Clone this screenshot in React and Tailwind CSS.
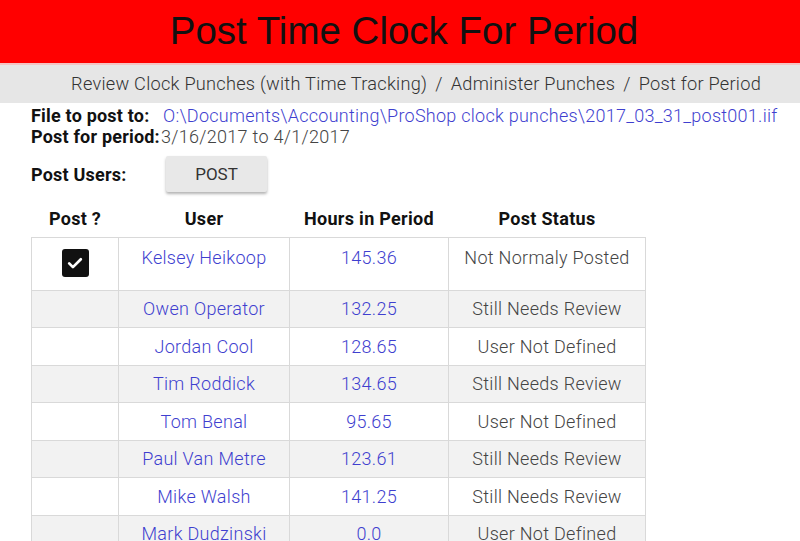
import React from "react";

const rows = [
  { name: "Kelsey Heikoop", hours: "145.36", status: "Not Normaly Posted", checked: true },
  { name: "Owen Operator", hours: "132.25", status: "Still Needs Review" },
  { name: "Jordan Cool", hours: "128.65", status: "User Not Defined" },
  { name: "Tim Roddick", hours: "134.65", status: "Still Needs Review" },
  { name: "Tom Benal", hours: "95.65", status: "User Not Defined" },
  { name: "Paul Van Metre", hours: "123.61", status: "Still Needs Review" },
  { name: "Mike Walsh", hours: "141.25", status: "Still Needs Review" },
  { name: "Mark Dudzinski", hours: "0.0", status: "User Not Defined" },
];

export default function App() {
  return (
    <div className="w-[800px] h-[541px] overflow-hidden bg-white font-['Roboto',sans-serif]">
      <div className="h-[63px] bg-[#ff0000] flex items-center justify-center">
        <h1 className="font-['Liberation_Sans',Arial,sans-serif] text-[38.5px] text-[#111] pl-[8px] leading-none">
          Post Time Clock For Period
        </h1>
      </div>
      <div className="h-[2px] bg-[#f4c4c4]" />
      <div className="h-[38px] bg-[#e6e6e6] flex items-center justify-end pr-[39px] text-[18.2px] font-light tracking-[0.25px] text-[#333]">
        <span>Review Clock Punches (with Time Tracking)</span>
        <span className="mx-[8px]">/</span>
        <span>Administer Punches</span>
        <span className="mx-[8px]">/</span>
        <span>Post for Period</span>
      </div>
      <div className="pl-[31px] pt-[2px] text-[18px] leading-[21px]">
        <div className="flex">
          <span className="font-bold text-[#111] w-[132px] tracking-[0.2px]">File to post to:</span>
          <span className="text-[#3f3fcf] font-light tracking-[0.26px]">O:\Documents\Accounting\ProShop clock punches\2017_03_31_post001.iif</span>
        </div>
        <div className="flex">
          <span className="font-bold text-[#111] tracking-[0.2px]">Post for period:</span>
          <span className="text-[#444] font-light tracking-[0.3px] ml-[1px]">3/16/2017 to 4/1/2017</span>
        </div>
        <div className="flex items-center mt-[9px]">
          <span className="font-bold text-[#111] w-[135px] tracking-[0.2px]">Post Users:</span>
          <button className="w-[101px] h-[36px] bg-[#e8e8e8] rounded-[2px] text-[17px] text-[#333] shadow-[0_2px_3px_rgba(0,0,0,0.3)]">
            POST
          </button>
        </div>
        <table className="mt-[9px] border-collapse text-[18px]">
          <thead>
            <tr className="h-[36px]">
              <th className="w-[87px] font-bold text-[#111] tracking-[0.3px] align-middle">Post ?</th>
              <th className="w-[171px] font-bold text-[#111] tracking-[0.3px]">User</th>
              <th className="w-[159px] font-bold text-[#111] tracking-[0.3px]">Hours in Period</th>
              <th className="w-[197px] font-bold text-[#111] tracking-[0.3px]">Post Status</th>
            </tr>
          </thead>
          <tbody>
            {rows.map((r, i) => (
              <tr key={i} className={i % 2 === 1 ? "bg-[#f2f2f2]" : "bg-white"}>
                <td className={"border border-[#d9d9d9] text-center " + (r.checked ? "h-[53px] align-top pt-[11px]" : "h-[37.5px]")}>
                  {r.checked && (
                    <span className="inline-flex w-[27px] h-[28px] bg-[#111] rounded-[3px] items-center justify-center">
                      <svg width="20" height="20" viewBox="0 0 24 24" fill="none" stroke="white" strokeWidth="3.2" strokeLinecap="round" strokeLinejoin="round">
                        <path d="M5 12.5l4.5 4.5L19 7.5" />
                      </svg>
                    </span>
                  )}
                </td>
                <td className={"border border-[#d9d9d9] text-center text-[#3f3fcf] font-light tracking-[0.3px] " + (r.checked ? "align-top pt-[9px]" : "")}>{r.name}</td>
                <td className={"border border-[#d9d9d9] text-center text-[#3f3fcf] font-light tracking-[0.3px] " + (r.checked ? "align-top pt-[9px]" : "")}>{r.hours}</td>
                <td className={"border border-[#d9d9d9] text-center text-[#444] font-light tracking-[0.3px] " + (r.checked ? "align-top pt-[9px]" : "")}>{r.status}</td>
              </tr>
            ))}
          </tbody>
        </table>
      </div>
    </div>
  );
}
